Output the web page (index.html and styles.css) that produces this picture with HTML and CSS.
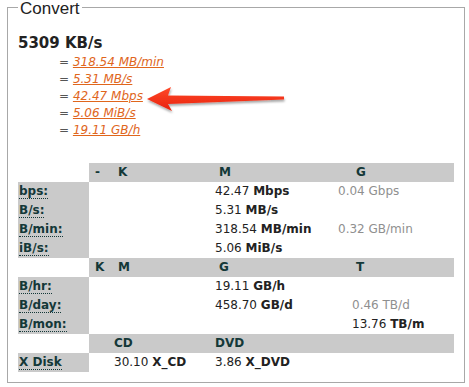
FILE: index.html
```html
<!DOCTYPE html>
<html>
<head>
<meta charset="utf-8">
<link rel="stylesheet" href="styles.css">
</head>
<body>
<fieldset class="box">
  <legend class="box-title">Convert</legend>
  <div class="source">5309 KB/s</div>
  <ul class="eq-list">
    <li><span class="eq">=</span> <a href="#" class="eq-link">318.54 MB/min</a></li>
    <li><span class="eq">=</span> <a href="#" class="eq-link">5.31 MB/s</a></li>
    <li><span class="eq">=</span> <a href="#" class="eq-link">42.47 Mbps</a></li>
    <li><span class="eq">=</span> <a href="#" class="eq-link">5.06 MiB/s</a></li>
    <li><span class="eq">=</span> <a href="#" class="eq-link">19.11 GB/h</a></li>
  </ul>
  <table class="grid">
    <colgroup>
      <col class="c-label"><col class="c1"><col class="c2"><col class="c3"><col class="c4"><col class="c5">
    </colgroup>
    <tr class="head">
      <td class="blank"></td><th class="p1">-</th><th class="hx">K</th><th class="hx">M</th><th></th><th class="hx">G</th>
    </tr>
    <tr><td class="lab"><abbr>bps:</abbr></td><td colspan="2"></td><td>42.47 <b>Mbps</b></td><td colspan="2" class="dim">0.04 Gbps</td></tr>
    <tr><td class="lab"><abbr>B/s:</abbr></td><td colspan="2"></td><td>5.31 <b>MB/s</b></td><td colspan="2"></td></tr>
    <tr><td class="lab"><abbr>B/min:</abbr></td><td colspan="2"></td><td>318.54 <b>MB/min</b></td><td colspan="2" class="dim">0.32 GB/min</td></tr>
    <tr><td class="lab"><abbr>iB/s:</abbr></td><td colspan="2"></td><td>5.06 <b>MiB/s</b></td><td colspan="2"></td></tr>
    <tr class="head">
      <td class="blank"></td><th class="p1">K</th><th class="hx">M</th><th class="hx">G</th><th></th><th class="hx">T</th>
    </tr>
    <tr><td class="lab"><abbr>B/hr:</abbr></td><td colspan="2"></td><td>19.11 <b>GB/h</b></td><td></td><td></td></tr>
    <tr><td class="lab"><abbr>B/day:</abbr></td><td colspan="2"></td><td>458.70 <b>GB/d</b></td><td></td><td class="dim">0.46 TB/d</td></tr>
    <tr><td class="lab"><abbr>B/mon:</abbr></td><td colspan="2"></td><td></td><td></td><td>13.76 <b>TB/m</b></td></tr>
    <tr class="head">
      <td class="blank"></td><th></th><th>CD</th><th>DVD</th><th></th><th></th>
    </tr>
    <tr><td class="lab"><abbr>X Disk</abbr></td><td></td><td>30.10 <b>X_CD</b></td><td>3.86 <b>X_DVD</b></td><td></td><td></td></tr>
  </table>
</fieldset>
<svg class="arrow" width="150" height="40" viewBox="140 80 150 40" xmlns="http://www.w3.org/2000/svg">
  <defs>
    <filter id="sh" x="-10%" y="-30%" width="120%" height="180%">
      <feDropShadow dx="0.5" dy="2" stdDeviation="1.2" flood-color="#000" flood-opacity="0.35"/>
    </filter>
    <linearGradient id="rg" x1="0" y1="0" x2="0" y2="1">
      <stop offset="0" stop-color="#ff4a2a"/>
      <stop offset="1" stop-color="#e8200c"/>
    </linearGradient>
  </defs>
  <polygon filter="url(#sh)" fill="url(#rg)" points="147,99 171,87 168,95.5 284,96.5 284,99.5 168,104 172,111"/>
</svg>
</body>
</html>
```
FILE: styles.css
```css
html, body {
  margin: 0;
  padding: 0;
  background: #fff;
}
body {
  position: relative;
  width: 469px;
  height: 387px;
  overflow: hidden;
  font-family: "DejaVu Sans", Verdana, sans-serif;
  font-size: 12px;
  color: #222;
}
.box {
  margin: -2px 4px 0 7px;
  padding: 17px 10px 10px 10px;
  border: 1px solid #a8a8a8;
  min-width: 0;
}
.box-title {
  padding: 4px 2px 0 2px;
  font-family: "Liberation Sans", Arial, sans-serif;
  font-size: 17px;
  line-height: 14px;
  color: #222;
}
.source {
  font-weight: bold;
  font-size: 15px;
  line-height: 20px;
  color: #222;
}
.eq-list {
  list-style: none;
  margin: 1px 0 0 0;
  padding: 0 0 0 41px;
  line-height: 17px;
}
.eq {
  color: #555;
}
.eq-link {
  color: #e0661c;
  font-style: italic;
  text-decoration: underline;
}
.grid {
  margin-top: 24px;
  width: 436px;
  border-collapse: collapse;
  border-spacing: 0;
  table-layout: fixed;
}
.c-label { width: 71px; }
.c1 { width: 20px; }
.c2 { width: 101px; }
.c3 { width: 123px; }
.c4 { width: 14px; }
.c5 { width: 107px; }
.grid td, .grid th {
  height: 19px;
  padding: 0 0 0 5px;
  line-height: 19px;
  white-space: nowrap;
  text-align: left;
  vertical-align: middle;
  overflow: visible;
}
.grid th {
  background: #cacaca;
  font-weight: bold;
  color: #143838;
}
.grid th.hx { padding-left: 9px; }
.grid th.p1 { padding-left: 6px; }
.grid td.blank { background: #fff; }
.grid td.lab {
  background: #cacaca;
  padding-left: 1px;
  font-weight: bold;
  color: #143838;
}
.lab abbr {
  text-decoration: none;
  border-bottom: 1px dotted #143838;
}
.grid td.dim { color: #8f8f8f; }
.arrow {
  position: absolute;
  left: 140px;
  top: 80px;
}
```
